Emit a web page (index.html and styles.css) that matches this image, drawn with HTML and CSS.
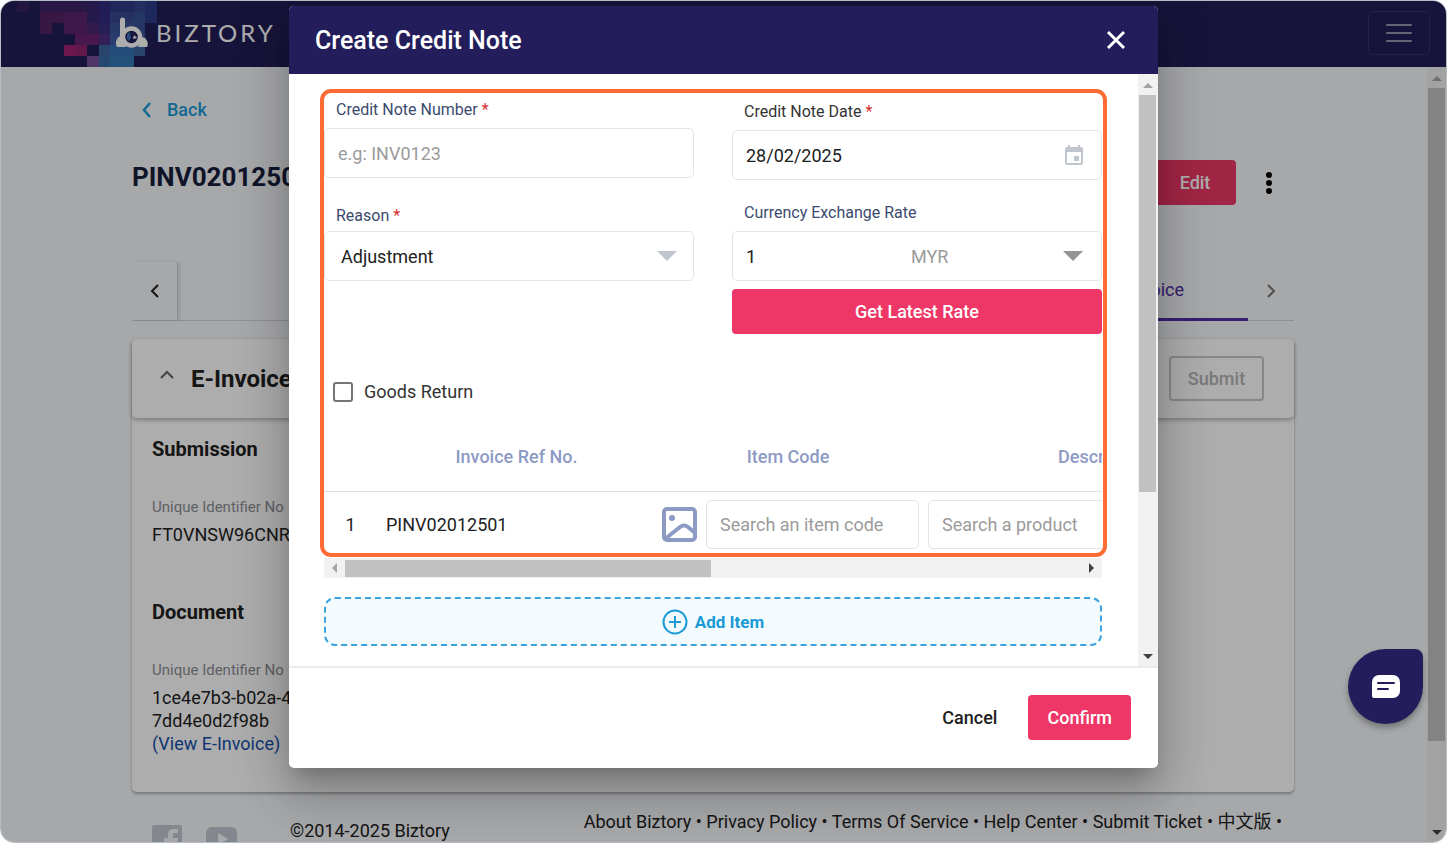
FILE: index.html
```html
<!DOCTYPE html>
<html lang="en">
<head>
    <meta charset="UTF-8">
    <meta name="viewport" content="width=device-width, initial-scale=1.0">
    <title>Biztory - Create Credit Note</title>
    <link rel="stylesheet" href="styles.css">
</head>
<body>
    <div class="app">
        <header class="topbar">
            <svg class="topbar-pixels" viewBox="0 0 12 6" preserveAspectRatio="none" shape-rendering="crispEdges" aria-hidden="true">
                <path fill="#34215f" d="M0 0h1v1h-1z"/>
                <path fill="#3b2466" d="M2 0h4v1h-4z"/>
                <path fill="#37256f" d="M6 0h1v2h-1z"/>
                <path fill="#332a80" d="M7 0h1v2h-1z"/>
                <path fill="#2e3a8a" d="M8 0h2v1h-2z"/>
                <path fill="#36458f" d="M10 0h1v1h-1z"/>
                <path fill="#2c3c8a" d="M11 0h1v2h-1z"/>
                <path fill="#532363" d="M2 1h2v1h-2zM2 2h1v1h-1z"/>
                <path fill="#5c246a" d="M4 1h2v1h-2zM4 2h2v1h-2z"/>
                <path fill="#38488f" d="M8 1h2v1h-2z"/>
                <path fill="#365294" d="M10 1h1v2h-1z"/>
                <path fill="#4a286f" d="M6 2h1v1h-1z"/>
                <path fill="#3a2e82" d="M7 2h1v1h-1z"/>
                <path fill="#3a5498" d="M8 2h2v1h-2z"/>
                <path fill="#6a2472" d="M5 3h2v1h-2z"/>
                <path fill="#4c3084" d="M7 3h1v1h-1z"/>
                <path fill="#3d5ca4" d="M8 3h3v1h-3z"/>
                <path fill="#a32273" d="M4 4h1v1h-1z"/>
                <path fill="#92246f" d="M5 4h1v1h-1z"/>
                <path fill="#3d66a2" d="M7 4h1v1h-1zM10 4h1v1h-1z"/>
                <path fill="#3670b4" d="M8 4h2v1h-2z"/>
                <path fill="#754e96" d="M6 5h1v1h-1z"/>
                <path fill="#366ba6" d="M7 5h1v1h-1z"/>
                <path fill="#3378b4" d="M8 5h2v1h-2z"/>
            </svg>
            <a class="brand" href="#">
                <svg width="34" height="34" viewBox="0 0 34 34" aria-hidden="true">
                    <path fill="#fff" d="M5 20a8 8 0 0 0-3 11h9z"/>
                    <path fill="#fff" d="M27 21a7 7 0 0 1 5 10h-9z"/>
                    <circle cx="16.500" cy="21" r="8.500" fill="#221e57" stroke="#fff" stroke-width="4.500"/>
                    <path fill="none" stroke="#fff" stroke-width="5" stroke-linecap="round" d="M7.500 4v17"/>
                    <path fill="#3670b4" d="M15 16a5 5 0 0 0-1 9l2-3z"/>
                    <path fill="#fff" d="M19 19l3 3-4 1z"/>
                </svg>
                <span class="brand-name">BIZTORY</span>
            </a>
            <button class="menu-button" type="button" aria-label="Menu">
                <svg width="26" height="22" viewBox="0 0 26 22"><path stroke="currentColor" stroke-width="2" stroke-linecap="round" d="M1 3h24M1 11h24M1 19h24"/></svg>
            </button>
        </header>

        <div class="page">
            <main class="content">
                <a class="back-link" href="#">
                    <svg width="10" height="16" viewBox="0 0 10 16"><path fill="none" stroke="currentColor" stroke-width="2.500" d="M8 1L2 8l6 7"/></svg>
                    Back
                </a>

                <div class="title-row">
                    <h1>PINV02012501</h1>
                    <button class="btn btn-primary edit-button" type="button">Edit</button>
                    <button class="dots-button" type="button" aria-label="More">
                        <svg width="6" height="22" viewBox="0 0 6 22"><circle cx="3" cy="3" r="3"/><circle cx="3" cy="11" r="3"/><circle cx="3" cy="19" r="3"/></svg>
                    </button>
                </div>

                <nav class="tabs">
                    <button class="tabs-arrow tabs-arrow-prev" type="button" aria-label="Previous tabs">
                        <svg width="10" height="16" viewBox="0 0 10 16"><path fill="none" stroke="currentColor" stroke-width="2" d="M8 2L2 8l6 6"/></svg>
                    </button>
                    <a class="tab" href="#">E-Invoice</a>
                    <button class="tabs-arrow tabs-arrow-next" type="button" aria-label="Next tabs">
                        <svg width="10" height="16" viewBox="0 0 10 16"><path fill="none" stroke="currentColor" stroke-width="2" d="M2 2l6 6-6 6"/></svg>
                    </button>
                </nav>

                <section class="card">
                    <div class="card-header">
                        <svg width="14" height="20" viewBox="0 0 14 20"><path fill="none" stroke="#666" stroke-width="2" d="M1 9l6-6 6 6"/></svg>
                        <h2>E-Invoice</h2>
                        <button class="submit-button" type="button" disabled>Submit</button>
                    </div>
                    <div class="card-body">
                        <div class="info">
                            <h3>Submission</h3>
                            <div class="info-label">Unique Identifier No</div>
                            <div class="info-value">FT0VNSW96CNRK</div>
                        </div>
                        <div class="info">
                            <h3>Document</h3>
                            <div class="info-label">Unique Identifier No</div>
                            <div class="info-value">1ce4e7b3-b02a-4c<br>7dd4e0d2f98b<br><a href="#">(View E-Invoice)</a></div>
                        </div>
                    </div>
                </section>

                <footer class="footer">
                    <div class="social">
                        <svg width="30" height="30" viewBox="0 0 30 30"><path fill="#c3c8d2" d="M2 0h26a2 2 0 0 1 2 2v26a2 2 0 0 1-2 2h-7V18h4l1-5h-5v-3c0-2 1-2 2-2h3V4h-4c-4 0-6 2-6 6v3h-4v5h4v12H2a2 2 0 0 1-2-2V2a2 2 0 0 1 2-2z"/></svg>
                        <svg width="31" height="26" viewBox="0 0 31 26"><path fill="#c3c8d2" fill-rule="evenodd" d="M6 2h19q6 0 6 7v10q0 7-6 7H6q-6 0-6-7V9q0-7 6-7zM12 8v12l10-6z"/></svg>
                    </div>
                    <span class="copyright">©2014-2025 Biztory</span>
                    <div class="footer-links">
                        <a href="#">About Biztory</a> •
                        <a href="#">Privacy Policy</a> •
                        <a href="#">Terms Of Service</a> •
                        <a href="#">Help Center</a> •
                        <a href="#">Submit Ticket</a> •
                        <a href="#">中文版</a> •
                    </div>
                </footer>
            </main>

            <div class="scrollbar page-scrollbar">
                <i class="arrow arrow-up"></i>
                <div class="thumb"></div>
                <i class="arrow arrow-down"></i>
            </div>
        </div>

        <div class="overlay">
            <div class="modal" role="dialog" aria-labelledby="modal-title">
                <div class="modal-header">
                    <h2 id="modal-title">Create Credit Note</h2>
                    <button class="close-button" type="button" aria-label="Close">
                        <svg width="20" height="20" viewBox="0 0 20 20"><path stroke="currentColor" stroke-width="3" d="M2 2l16 16M18 2L2 18"/></svg>
                    </button>
                </div>

                <div class="modal-main">
                    <div class="modal-body">
                        <div class="highlight"></div>

                        <div class="form">
                            <div class="form-column">
                                <div class="field">
                                    <label for="note-number">Credit Note Number <span class="required">*</span></label>
                                    <div class="control">
                                        <input type="text" id="note-number" placeholder="e.g: INV0123">
                                    </div>
                                </div>
                                <div class="field field-select">
                                    <label for="reason">Reason <span class="required">*</span></label>
                                    <div class="control">
                                        <select id="reason">
                                            <option>Adjustment</option>
                                        </select>
                                        <svg class="caret" width="20" height="10" viewBox="0 0 20 10"><path fill="#c0c6cd" d="M0 0h20L10 10z"/></svg>
                                    </div>
                                </div>
                            </div>

                            <div class="form-column form-column-right">
                                <div class="field">
                                    <label class="label-dark" for="note-date">Credit Note Date <span class="required">*</span></label>
                                    <div class="control">
                                        <input type="text" id="note-date" value="28/02/2025">
                                        <svg class="calendar" width="18" height="20" viewBox="0 0 18 20"><path fill="#c0c6cd" fill-rule="evenodd" d="M3 0h2v2h8V0h2v2h1a2 2 0 0 1 2 2v14a2 2 0 0 1-2 2H2a2 2 0 0 1-2-2V4a2 2 0 0 1 2-2h1zM2 7v11h14V7zM9 11h5v5H9z"/></svg>
                                    </div>
                                </div>
                                <div class="field">
                                    <label for="rate">Currency Exchange Rate</label>
                                    <div class="control">
                                        <input type="text" id="rate" value="1">
                                        <select class="currency" aria-label="Currency">
                                            <option>MYR</option>
                                        </select>
                                        <svg class="caret" width="20" height="10" viewBox="0 0 20 10"><path fill="#949494" d="M0 0h20L10 10z"/></svg>
                                    </div>
                                    <button class="btn btn-primary rate-button" type="button">Get Latest Rate</button>
                                </div>
                            </div>
                        </div>

                        <label class="checkbox">
                            <input type="checkbox">
                            Goods Return
                        </label>

                        <div class="table-wrap">
                            <table class="items">
                                <colgroup>
                                    <col class="col-index">
                                    <col class="col-ref">
                                    <col class="col-code">
                                    <col class="col-description">
                                </colgroup>
                                <thead>
                                    <tr>
                                        <th></th>
                                        <th>Invoice Ref No.</th>
                                        <th>Item Code</th>
                                        <th>Description</th>
                                    </tr>
                                </thead>
                                <tbody>
                                    <tr>
                                        <td class="cell-index">1</td>
                                        <td class="cell-ref">PINV02012501</td>
                                        <td>
                                            <div class="code-cell">
                                                <svg width="35" height="35" viewBox="0 0 35 35"><rect x="2" y="2" width="31" height="31" rx="3" fill="none" stroke="#8c9ac4" stroke-width="4"/><circle cx="10" cy="11" r="3" fill="#8c9ac4"/><path fill="none" stroke="#8c9ac4" stroke-width="4" stroke-linejoin="round" d="M3 32l15-12q4-3 8 0l7 6"/></svg>
                                                <input type="text" placeholder="Search an item code" aria-label="Item code">
                                            </div>
                                        </td>
                                        <td class="cell-product"><input type="text" placeholder="Search a product" aria-label="Product"></td>
                                    </tr>
                                </tbody>
                            </table>
                        </div>
                        <div class="scrollbar-x">
                            <i class="arrow arrow-left"></i>
                            <div class="thumb"></div>
                            <i class="arrow arrow-right"></i>
                        </div>

                        <button class="add-item" type="button">
                            <svg width="26" height="26" viewBox="0 0 26 26"><circle cx="13" cy="13" r="11.500" fill="none" stroke="currentColor" stroke-width="2"/><path stroke="currentColor" stroke-width="2" d="M13 7v12M7 13h12"/></svg>
                            Add Item
                        </button>
                    </div>

                    <div class="scrollbar modal-scrollbar">
                        <i class="arrow arrow-up"></i>
                        <div class="thumb"></div>
                        <i class="arrow arrow-down"></i>
                    </div>
                </div>

                <div class="modal-footer">
                    <button class="btn btn-text" type="button">Cancel</button>
                    <button class="btn btn-primary" type="button">Confirm</button>
                </div>
            </div>
        </div>

        <button class="chat-button" type="button" aria-label="Chat">
            <svg width="28" height="23" viewBox="0 0 28 23"><path fill="#fff" d="M7 0h14a7 7 0 0 1 7 7v9a7 7 0 0 1-7 7H2a2 2 0 0 1-2-2V7a7 7 0 0 1 7-7z"/><path stroke="#231e5b" stroke-width="2" stroke-linecap="round" d="M6 8h16M6 14h10"/></svg>
        </button>
    </div>
</body>
</html>
```
FILE: styles.css
```css
* {
    box-sizing: border-box;
}

body {
    margin: 0;
    font-family: Roboto, "Noto Sans CJK SC", sans-serif;
    font-size: 18px;
    color: #212121;
    background-color: #fff;
}

h1, h2, h3 {
    margin: 0;
}

a {
    color: inherit;
    text-decoration: none;
}

button, input, select {
    font-family: inherit;
    font-size: 18px;
    color: inherit;
}

button {
    padding: 0;
    border: none;
    background: none;
    cursor: pointer;
}

svg {
    display: block;
    flex-shrink: 0;
}

.app {
    position: relative;
    display: flex;
    flex-direction: column;
    height: 100vh;
    border: 1px solid #b4bcc6;
    border-radius: 14px;
    overflow: hidden;
}

/* Top bar */
.topbar {
    position: relative;
    display: flex;
    align-items: center;
    flex-shrink: 0;
    height: 66px;
    padding: 0 16px 3px 114px;
    background-color: #221e57;
}

.topbar-pixels {
    position: absolute;
    top: 0;
    left: 16px;
    width: 140px;
    height: 100%;
}

.brand {
    position: relative;
    display: flex;
    align-items: center;
    gap: 7px;
    color: #fff;
}

.brand-name {
    font-family: Lato, sans-serif;
    font-size: 24px;
    letter-spacing: 3px;
}

.menu-button {
    display: flex;
    align-items: center;
    justify-content: center;
    width: 62px;
    height: 44px;
    margin-left: auto;
    border: 1px solid #38346a;
    border-radius: 5px;
    color: #9896b0;
}

/* Page */
.page {
    flex: 1;
    display: flex;
    min-height: 0;
    background-color: #f6f8fb;
}

.content {
    flex: 1;
    min-width: 0;
    padding: 31px 133px 0 131px;
    overflow: hidden;
}

.back-link {
    display: flex;
    align-items: center;
    gap: 15px;
    padding-left: 10px;
    line-height: 24px;
    font-weight: 500;
    color: #1a9ad7;
}

.title-row {
    display: flex;
    align-items: center;
    margin-top: 38px;
}

.title-row h1 {
    flex: 1;
    padding-bottom: 10px;
    font-size: 26px;
    line-height: 33px;
    color: #16203c;
}

.btn {
    height: 45px;
    padding: 0 19px;
    border-radius: 4px;
    font-weight: 500;
}

.btn-primary {
    background-color: #ee3766;
    color: #fff;
}

.btn-text {
    padding: 0 12px;
}

.edit-button {
    width: 82px;
}

.dots-button {
    margin: 0 22px 0 30px;
}

.tabs {
    display: flex;
    height: 59px;
    margin-top: 57px;
    border-bottom: 1px solid #d2d4d8;
}

.tabs-arrow {
    display: flex;
    align-items: center;
    justify-content: center;
    width: 46px;
}

.tabs-arrow-prev {
    border-right: 1px solid #ccced2;
    box-shadow: 2px 0 3px rgba(0, 0, 0, 0.1);
}

.tabs-arrow-next {
    color: #777;
}

.tab {
    width: 206px;
    height: 59px;
    margin-left: auto;
    padding-right: 64px;
    border-bottom: 3px solid #512da8;
    line-height: 56px;
    text-align: right;
    color: #512da8;
}

.card {
    margin-top: 18px;
    border-radius: 5px;
    background-color: #fff;
    box-shadow: 0 2px 3px rgba(0, 0, 0, 0.3);
}

.card-header {
    display: flex;
    align-items: center;
    gap: 17px;
    height: 79px;
    padding: 0 30px 0 28px;
    border-radius: 5px;
    box-shadow: 0 2px 5px rgba(0, 0, 0, 0.3);
}

.card-header h2 {
    flex: 1;
    font-size: 24px;
}

.submit-button {
    width: 95px;
    height: 45px;
    border: 2px solid #c8c8c8;
    border-radius: 4px;
    font-weight: 500;
    color: #b4b4b4;
}

.card-body {
    display: flex;
    flex-direction: column;
    gap: 54px;
    padding: 19px 20px 37px;
}

.info h3 {
    font-size: 20px;
    line-height: 24px;
}

.info-label {
    margin: 36px 0 6px;
    font-size: 15px;
    line-height: 20px;
    color: #8d8f96;
}

.info-value {
    line-height: 23px;
}

.info-value a {
    color: #1550a8;
}

/* Footer */
.footer {
    display: flex;
    align-items: flex-start;
    padding: 18px 12px 0 20px;
    line-height: 24px;
}

.social {
    display: flex;
    gap: 24px;
    width: 138px;
    padding-top: 15px;
}

.copyright {
    padding-top: 9px;
}

.footer-links {
    margin-left: auto;
    white-space: nowrap;
}

/* Scrollbars */
.scrollbar {
    display: flex;
    flex-direction: column;
    align-items: center;
    flex-shrink: 0;
    width: 19px;
    padding: 9px 1px 7px;
    background-color: #f1f1f1;
}

.scrollbar .thumb {
    width: 100%;
    margin: 7px 0 auto;
    background-color: #c1c1c1;
}

.page-scrollbar .thumb {
    height: 86%;
}

.modal-scrollbar {
    width: 20px;
    padding: 9px 2px 7px 1px;
}

.modal-scrollbar .thumb {
    height: 69%;
}

.arrow {
    flex-shrink: 0;
    width: 0;
    height: 0;
    border: 5px solid transparent;
}

.arrow-up {
    border-top: none;
    border-bottom-color: #a3a3a3;
}

.arrow-down {
    border-bottom: none;
    border-top-color: #404040;
}

.arrow-left {
    border-left: none;
    border-right-color: #a3a3a3;
}

.arrow-right {
    border-right: none;
    border-left-color: #404040;
}

.scrollbar-x {
    display: flex;
    align-items: center;
    height: 20px;
    padding: 0 8px;
    background-color: #f1f1f1;
}

.scrollbar-x .thumb {
    width: 48%;
    height: 17px;
    margin: 0 auto 0 8px;
    background-color: #c1c1c1;
}

/* Modal */
.overlay {
    position: absolute;
    inset: 0;
    display: flex;
    align-items: flex-start;
    justify-content: center;
    padding-top: 5px;
    background-color: rgba(0, 0, 0, 0.32);
}

.modal {
    width: 60%;
    min-width: 869px;
    border-radius: 5px;
    background-color: #fff;
    box-shadow: 0 13px 18px -8px rgba(0, 0, 0, 0.2), 0 28px 45px 4px rgba(0, 0, 0, 0.14), 0 11px 54px 9px rgba(0, 0, 0, 0.12);
    overflow: hidden;
}

.modal-header {
    display: flex;
    align-items: center;
    justify-content: space-between;
    height: 68px;
    padding: 0 32px 0 26px;
    background-color: #231e5b;
    color: #fff;
}

.modal-header h2 {
    font-size: 25px;
    font-weight: 500;
}

.modal-main {
    display: flex;
}

.modal-body {
    position: relative;
    flex: 1;
    min-width: 0;
    padding: 26px 36px 20px 35px;
}

/* Orange frame drawn over the form */
.highlight {
    position: absolute;
    top: 15px;
    right: 31px;
    left: 31px;
    height: 468px;
    border: 4px solid #ff6b35;
    border-radius: 11px;
    pointer-events: none;
}

.form {
    display: flex;
    gap: 38px;
}

.form-column {
    flex: 1;
    display: flex;
    flex-direction: column;
    gap: 28px;
}

.form-column-right {
    gap: 23px;
    padding-top: 2px;
}

.field label {
    display: block;
    height: 20px;
    margin: 0 0 8px 12px;
    font-size: 16px;
    line-height: 20px;
    color: #3c4a6e;
}

.field-select label {
    margin-bottom: 5px;
}

.field .label-dark {
    color: #333;
}

.required {
    color: #d32f2f;
}

.control {
    display: flex;
    align-items: center;
    height: 50px;
    padding: 0 18px 0 13px;
    border: 1px solid #e4e4e4;
    border-radius: 5px;
}

.control input, .control select {
    flex: 1;
    min-width: 0;
    padding: 0;
    border: none;
    outline: none;
    background: none;
    appearance: none;
}

.field-select .control {
    padding: 0 16px;
}

.control .currency {
    padding-left: 13px;
    color: #9b9b9b;
}

input::placeholder {
    color: #9b9b9b;
    opacity: 1;
}

.rate-button {
    width: 100%;
    margin-top: 8px;
}

.checkbox {
    display: flex;
    align-items: center;
    gap: 11px;
    width: max-content;
    margin: 46px 0 19px 9px;
    line-height: 24px;
    color: #333;
}

.checkbox input {
    width: 20px;
    height: 20px;
    margin: 0;
    border: 2px solid #757575;
    border-radius: 3px;
    appearance: none;
}

.table-wrap {
    overflow: hidden;
}

.items {
    width: 964px;
    table-layout: fixed;
    border-collapse: collapse;
}

.col-index {
    width: 53px;
}

.col-ref {
    width: 279px;
}

.col-code {
    width: 264px;
}

.col-description {
    width: 368px;
}

.items th {
    height: 68px;
    padding: 0;
    border-bottom: 1px solid #e0e0e0;
    font-weight: 500;
    color: #8c9ac4;
}

.items td {
    height: 67px;
    padding: 0;
}

.items .cell-index {
    text-align: center;
}

.items .cell-ref {
    padding-left: 9px;
}

.items input {
    width: 213px;
    height: 49px;
    padding: 0 13px;
    border: 1px solid #e4e4e4;
    border-radius: 5px;
}

.code-cell {
    display: flex;
    align-items: center;
    gap: 9px;
    padding-left: 6px;
}

.items .cell-product {
    padding-left: 8px;
}

.items .cell-product input {
    width: 350px;
}

.add-item {
    display: flex;
    align-items: center;
    justify-content: center;
    gap: 7px;
    width: 100%;
    height: 49px;
    margin-top: 19px;
    border: 2px dashed #3ba3dd;
    border-radius: 11px;
    background-color: #f3fbff;
    font-size: 17px;
    font-weight: 700;
    color: #1a9ad7;
}

.modal-footer {
    display: flex;
    align-items: center;
    justify-content: flex-end;
    gap: 19px;
    height: 102px;
    padding: 0 27px 2px;
    border-top: 2px solid #e9ebf0;
}

/* Chat */
.chat-button {
    position: absolute;
    right: 23px;
    bottom: 118px;
    display: flex;
    align-items: center;
    justify-content: center;
    width: 75px;
    height: 75px;
    border-radius: 50% 8px 50% 50%;
    background-color: #231e5b;
    box-shadow: 0 4px 6px rgba(0, 0, 0, 0.3);
}
```
